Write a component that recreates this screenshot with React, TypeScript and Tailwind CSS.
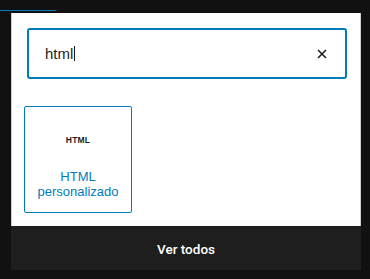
import { useState } from 'react'

function CloseIcon() {
  return (
    <svg width="10" height="10" viewBox="0 0 10 10" aria-hidden="true">
      <path d="M1 1 L9 9 M9 1 L1 9" stroke="#1e1e1e" strokeWidth="1.6" fill="none" />
    </svg>
  )
}

export default function App() {
  const [query, setQuery] = useState('html')

  return (
    <div
      className="h-[279px] w-[370px] bg-[#111111] pt-[10px]"
      style={{ fontFamily: '"Liberation Sans", Arial, sans-serif' }}
    >
      <div className="h-px w-[56px] bg-[#007cba]" />

      <div className="ml-[11px] mt-[2px] w-[350px]">
        {/* Search + results */}
        <div className="h-[213px] border-x border-[#cfcfcf] bg-white pt-[15px]">
          <div className="ml-[15px] mr-[13px] flex h-[51px] items-center rounded-[3px] border-2 border-[#007cba] pl-[16px] pr-[13px]">
            <div className="flex flex-1 items-center">
              <span className="text-[15px] leading-none text-[#1e1e1e]">{query}</span>
              <span className="ml-px h-[15px] w-px bg-[#1e1e1e]" />
            </div>
            <button
              onClick={() => setQuery('')}
              className="flex h-[20px] w-[20px] items-center justify-center"
              aria-label="Borrar búsqueda"
            >
              <CloseIcon />
            </button>
          </div>

          <div className="mt-[27px] ml-[12px] flex">
            <button className="flex h-[107px] w-[108px] flex-col items-center rounded-[2px] border border-[#007cba] bg-white">
              <span className="mt-[29px] text-[8.5px] font-bold leading-none tracking-[0.2px] text-[#1e1e1e]">
                HTML
              </span>
              <span className="mt-[24px] text-center text-[13px] leading-[15px] text-[#007cba]">
                HTML
                <br />
                personalizado
              </span>
            </button>
          </div>
        </div>

        {/* Footer */}
        <button className="flex h-[44px] w-full items-center justify-center bg-[#1e1e1e] pt-[2px]">
          <span
            className="text-[13.5px] font-medium text-white"
            style={{ fontFamily: 'Roboto, "Liberation Sans", sans-serif' }}
          >
            Ver todos
          </span>
        </button>
      </div>
    </div>
  )
}
